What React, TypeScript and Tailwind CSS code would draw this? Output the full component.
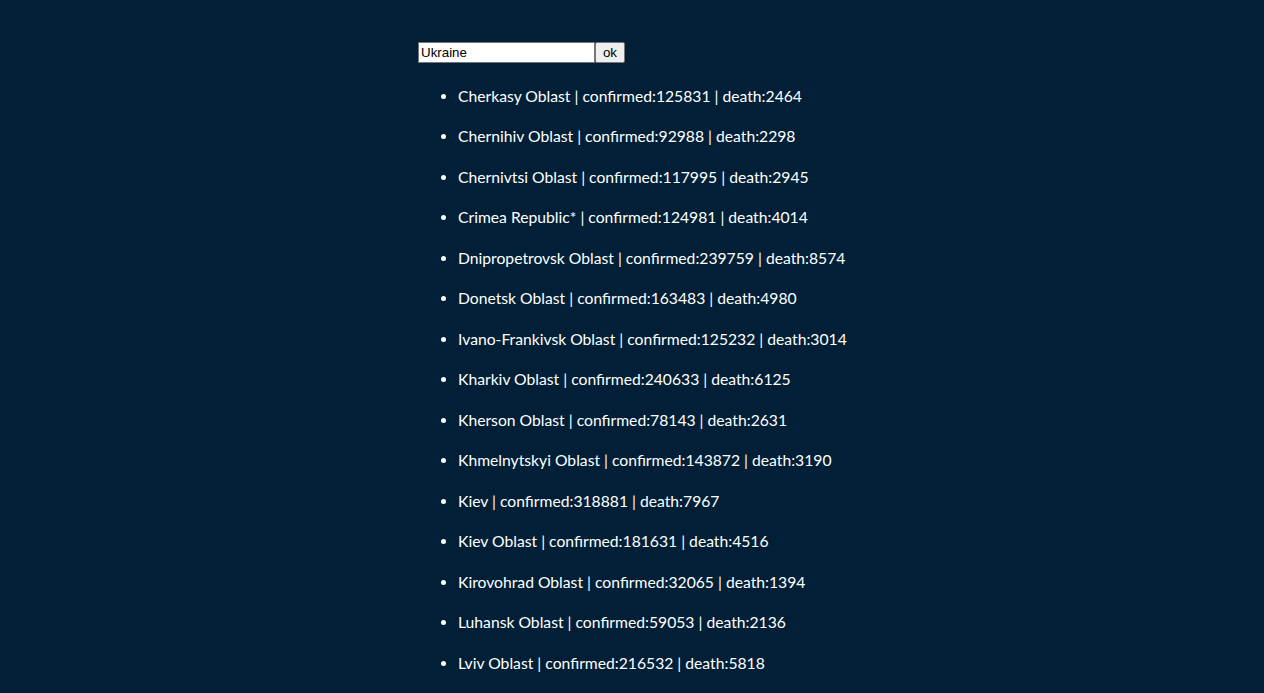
import React from "react";

const rows: [string, number, number][] = [
  ["Cherkasy Oblast", 125831, 2464],
  ["Chernihiv Oblast", 92988, 2298],
  ["Chernivtsi Oblast", 117995, 2945],
  ["Crimea Republic*", 124981, 4014],
  ["Dnipropetrovsk Oblast", 239759, 8574],
  ["Donetsk Oblast", 163483, 4980],
  ["Ivano-Frankivsk Oblast", 125232, 3014],
  ["Kharkiv Oblast", 240633, 6125],
  ["Kherson Oblast", 78143, 2631],
  ["Khmelnytskyi Oblast", 143872, 3190],
  ["Kiev", 318881, 7967],
  ["Kiev Oblast", 181631, 4516],
  ["Kirovohrad Oblast", 32065, 1394],
  ["Luhansk Oblast", 59053, 2136],
  ["Lviv Oblast", 216532, 5818],
];

export default function App() {
  return (
    <div className="min-h-screen h-[693px] overflow-hidden bg-[#012037]">
      <div className="mx-auto w-[428px] pt-[42px]">
        <div className="flex items-stretch h-[21px]">
          <input
            defaultValue="Ukraine"
            className="w-[177px] h-[21px] bg-white border border-[#767676] px-[2px] text-[13.33px] text-black outline-none"
            style={{ fontFamily: '"Liberation Sans", Arial, sans-serif' }}
          />
          <button
            className="h-[21px] w-[30px] bg-[#efefef] border border-[#767676] rounded-[2px] text-[13.33px] text-black"
            style={{ fontFamily: '"Liberation Sans", Arial, sans-serif' }}
          >
            ok
          </button>
        </div>
        <ul className="list-disc pl-[40px] mt-[12.5px] text-white text-[15.7px]" style={{ fontFamily: 'Lato, "Noto Sans", sans-serif' }}>
          {rows.map(([n, c, d]) => (
            <li key={n} className="py-2 leading-[24.5px] whitespace-nowrap">
              {n} | confirmed:{c} | death:{d}
            </li>
          ))}
        </ul>
      </div>
    </div>
  );
}
